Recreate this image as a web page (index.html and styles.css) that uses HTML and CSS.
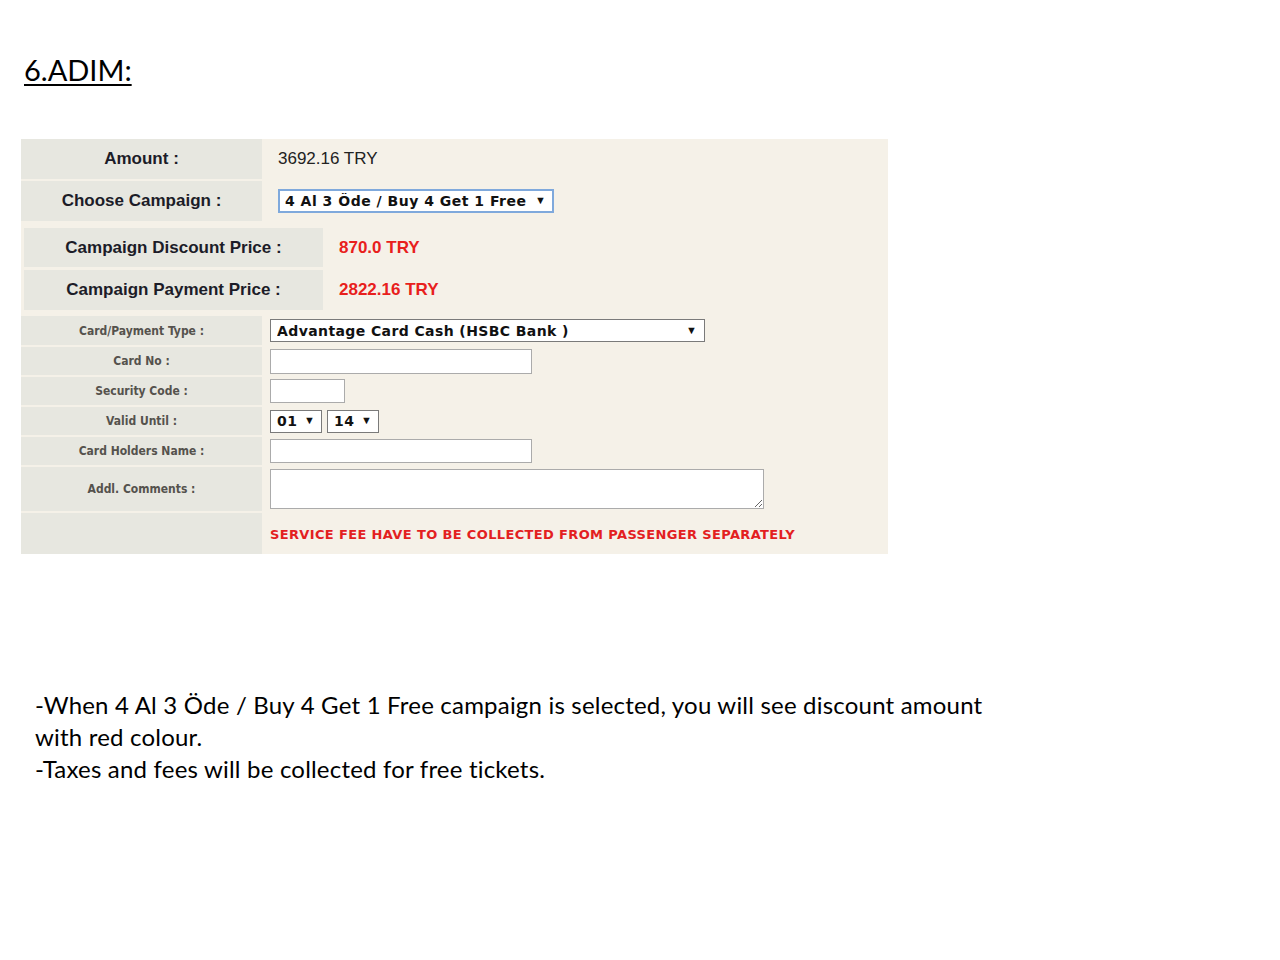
FILE: index.html
```html
<!DOCTYPE html>
<html lang="tr">
<head>
    <meta charset="UTF-8">
    <title>6.ADIM</title>
    <link rel="stylesheet" href="styles.css">
</head>
<body>
    <div class="slide">
        <h1 class="step-title">6.ADIM:</h1>

        <div class="payment-panel">
            <!-- tutar ve kampanya secimi -->
            <div class="summary-grid">
                <div class="big-label">Amount :</div>
                <div class="big-value">3692.16 TRY</div>
                <div class="big-label">Choose Campaign :</div>
                <div class="big-value">
                    <span class="select-wrap campaign-select">
                        <select>
                            <option>4 Al 3 Öde / Buy 4 Get 1 Free</option>
                        </select>
                        <span class="arrow">▼</span>
                    </span>
                </div>
            </div>

            <!-- kampanya fiyatlari -->
            <div class="campaign-grid">
                <div class="big-label">Campaign Discount Price :</div>
                <div class="big-value red">870.0 TRY</div>
                <div class="big-label">Campaign Payment Price :</div>
                <div class="big-value red">2822.16 TRY</div>
            </div>

            <!-- kart bilgileri -->
            <div class="card-grid">
                <div class="small-label">Card/Payment Type :</div>
                <div class="field">
                    <span class="select-wrap type-select">
                        <select>
                            <option>Advantage Card Cash (HSBC Bank )</option>
                        </select>
                        <span class="arrow">▼</span>
                    </span>
                </div>

                <div class="small-label">Card No :</div>
                <div class="field"><input type="text" class="input-long"></div>

                <div class="small-label">Security Code :</div>
                <div class="field"><input type="text" class="input-short"></div>

                <div class="small-label">Valid Until :</div>
                <div class="field date-fields">
                    <span class="select-wrap month-select">
                        <select><option>01</option></select>
                        <span class="arrow">▼</span>
                    </span>
                    <span class="select-wrap year-select">
                        <select><option>14</option></select>
                        <span class="arrow">▼</span>
                    </span>
                </div>

                <div class="small-label">Card Holders Name :</div>
                <div class="field"><input type="text" class="input-long holder-input"></div>

                <div class="small-label">Addl. Comments :</div>
                <div class="field"><textarea class="comments"></textarea></div>

                <div class="small-label"></div>
                <div class="field fee-note">SERVICE FEE HAVE TO BE COLLECTED FROM PASSENGER SEPARATELY</div>
            </div>
        </div>

        <div class="notes">
            <p>-When 4 Al 3 Öde / Buy 4 Get 1 Free campaign is selected, you will see discount amount with red colour.</p>
            <p>-Taxes and fees will be collected for free tickets.</p>
        </div>
    </div>
</body>
</html>
```

FILE: styles.css
```css
body {
    margin: 0;
    padding: 0;
    background-color: #ffffff;
    font-family: "Liberation Sans", Arial, sans-serif;
}

.slide {
    width: 1280px;
    height: 960px;
    padding-top: 48px;
    box-sizing: border-box;
}

.step-title {
    margin: 0 0 0 24px;
    font-family: Lato, "Open Sans", sans-serif;
    font-weight: normal;
    font-size: 29px;
    line-height: 44px;
    color: #000000;
    text-decoration: underline;
    text-decoration-thickness: 2px;
    text-underline-offset: 3px;
}

.payment-panel {
    width: 867px;
    margin: 47px 0 0 21px;
    background-color: #f5f1e8;
}

.summary-grid {
    display: grid;
    grid-template-columns: 241px 1fr;
    grid-auto-rows: 40px;
    row-gap: 2px;
}

.campaign-grid {
    display: grid;
    grid-template-columns: 299px 1fr;
    grid-template-rows: 39px 40px;
    row-gap: 3px;
    margin: 7px 0 0 3px;
}

.card-grid {
    display: grid;
    grid-template-columns: 241px 1fr;
    grid-template-rows: 29px 28px 28px 28px 28px 44px 41px;
    row-gap: 2px;
    margin-top: 6px;
}

.big-label, .small-label {
    display: flex;
    align-items: center;
    justify-content: center;
    background-color: #e7e7e0;
}

.big-label {
    font-size: 17px;
    font-weight: bold;
    color: #1c1c28;
}

.big-value {
    display: flex;
    align-items: center;
    padding-left: 16px;
    font-size: 17px;
    color: #222222;
}

.big-value.red {
    color: #e8201c;
    font-weight: bold;
}

.small-label {
    font-family: "DejaVu Sans Condensed", "DejaVu Sans", sans-serif;
    font-size: 12px;
    font-weight: bold;
    color: #55524d;
}

.field {
    display: flex;
    align-items: center;
    padding-left: 8px;
}

/* selectbox gorunumu */
.select-wrap {
    position: relative;
    display: inline-block;
}

.select-wrap select {
    appearance: none;
    -webkit-appearance: none;
    margin: 0;
    padding: 0 0 0 6px;
    background-color: #ffffff;
    border: 1px solid #7a7a7a;
    border-radius: 0;
    font-family: "DejaVu Sans", Verdana, sans-serif;
    font-weight: bold;
    font-size: 14px;
    color: #111111;
    box-sizing: border-box;
}

.select-wrap .arrow {
    position: absolute;
    top: 50%;
    transform: translateY(-58%);
    font-size: 11px;
    color: #111111;
    pointer-events: none;
}

.campaign-select select {
    width: 276px;
    height: 24px;
    border: 2px solid #7fa9dc;
    padding-left: 5px;
    letter-spacing: 0.5px;
}

.campaign-select .arrow {
    right: 8px;
}

.type-select select {
    width: 435px;
    height: 23px;
    letter-spacing: 0.4px;
}

.type-select .arrow {
    right: 8px;
}

.month-select select, .year-select select {
    width: 52px;
    height: 23px;
    letter-spacing: 0.4px;
}

.month-select .arrow, .year-select .arrow {
    right: 7px;
}

.date-fields {
    gap: 5px;
}

input[type="text"] {
    margin: 0;
    padding: 0;
    border: 1px solid #ababab;
    background-color: #ffffff;
    box-sizing: border-box;
}

.input-long {
    width: 262px;
    height: 25px;
}

.holder-input {
    height: 24px;
}

.input-short {
    width: 75px;
    height: 24px;
}

.comments {
    width: 494px;
    height: 40px;
    margin: 0;
    padding: 0;
    border: 1px solid #ababab;
    box-sizing: border-box;
    background-color: #ffffff;
}

.fee-note {
    padding-top: 2px;
    font-family: "DejaVu Sans", Verdana, sans-serif;
    font-size: 13px;
    font-weight: bold;
    letter-spacing: 0.36px;
    color: #e3201f;
}

.notes {
    margin: 135px 0 0 35px;
    width: 990px;
    font-family: Lato, "Open Sans", sans-serif;
    font-size: 24px;
    letter-spacing: 0.2px;
    line-height: 32px;
    color: #000000;
}

.notes p {
    margin: 0;
}
```
